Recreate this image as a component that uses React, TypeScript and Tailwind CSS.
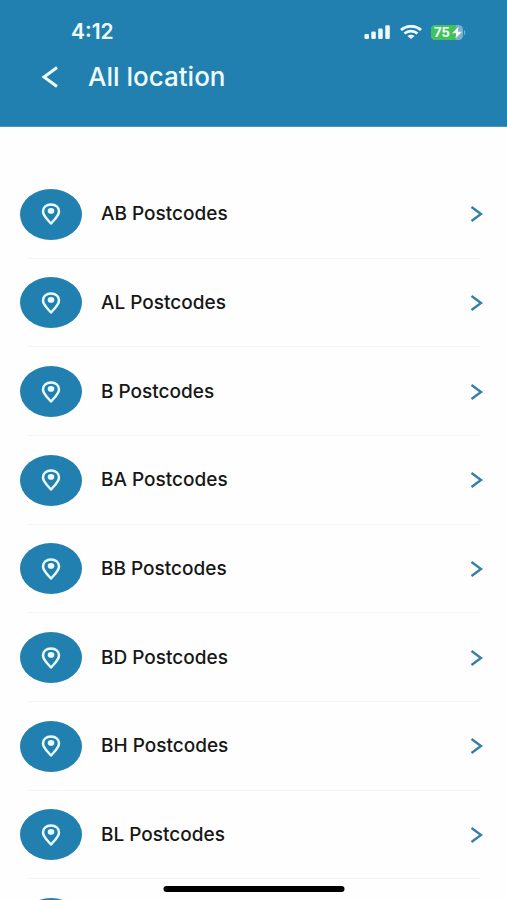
const postcodes = ['AB', 'AL', 'B', 'BA', 'BB', 'BD', 'BH', 'BL', 'BN'];

function PinIcon() {
  return (
    <svg viewBox="0 0 20 22" className="h-[22px] w-5" fill="none" aria-hidden="true">
      <path
        d="M10 1.400C5.300 1.400 2 4.400 2 8.400c0 4.200 5 8.800 8 12.100 3-3.300 8-7.900 8-12.100C18 4.400 14.700 1.400 10 1.400Z"
        stroke="#e9fbff"
        strokeWidth="2.500"
        strokeLinejoin="round"
      />
      <ellipse cx="10" cy="7.900" rx="3.300" ry="2.800" fill="#e9fbff" />
    </svg>
  );
}

function StatusBar() {
  return (
    <div className="flex h-8 items-center justify-between pr-[41px] pl-[71px]">
      <span className="text-[21px] leading-6 font-semibold">4:12</span>
      <div className="flex items-center gap-[9px]">
        <svg viewBox="0 0 27 14" className="h-3.5 w-[27px]" fill="currentColor" aria-label="Signal">
          <rect x="0.500" y="9" width="4.500" height="5" rx="1.300" />
          <rect x="7.300" y="6.500" width="4.500" height="7.500" rx="1.300" />
          <rect x="14.200" y="3.500" width="4.500" height="10.500" rx="1.300" />
          <rect x="21.300" y="0.300" width="4.500" height="13.700" rx="1.300" />
        </svg>
        <svg viewBox="0 0 22 14" className="h-3.5 w-[22px]" fill="none" stroke="currentColor" aria-label="Wi-Fi">
          <path d="M1 5c5.500-4.900 14.500-4.900 20 0" strokeWidth="2.700" />
          <path d="M4.500 8.500c3.700-3.200 9.300-3.200 13 0" strokeWidth="2.700" />
          <path d="M7.500 11c2-1.700 5-1.700 7 0L11 14Z" fill="currentColor" stroke="none" />
        </svg>
        <svg viewBox="0 0 35 15" className="h-[15px] w-[35px]" role="img" aria-label="Battery 75 percent, charging">
          <rect width="32" height="15" rx="4.500" fill="#7bb0cc" />
          <path d="M4.500 0H25v15H4.500A4.500 4.500 0 0 1 0 10.500v-6A4.500 4.500 0 0 1 4.500 0Z" fill="#3fc35f" />
          <path d="M33 5c1.800.600 1.800 4.400 0 5Z" fill="#7bb0cc" />
          <text x="3" y="12" fill="#fff" fontSize="13" fontWeight="700" fontFamily="Inter, sans-serif">
            75
          </text>
          <path d="m27.500 1.800-6.500 6.500h4.300L24.500 13.200 31 6.700h-4.300Z" fill="#fff" />
        </svg>
      </div>
    </div>
  );
}

function LocationRow({ code }: { code: string }) {
  return (
    <li className="relative">
      <button type="button" className="flex h-full w-full items-center pr-6 pl-5 text-left">
        <span className="flex h-[51px] w-[62px] shrink-0 items-center justify-center rounded-[50%] bg-[#2180af]">
          <PinIcon />
        </span>
        <span className="ml-[19px] flex-1 text-[19px] leading-6 font-medium text-[#171717]">{code} Postcodes</span>
        <svg viewBox="0 0 13 16" className="h-4 w-[13px]" fill="none" stroke="#3580a4" strokeWidth="2.400" aria-hidden="true">
          <path d="m1.500 1 9.500 7-9.500 7" />
        </svg>
      </button>
      <div className="absolute right-[27px] bottom-0 left-7 h-px bg-[#f5f5f5]" />
    </li>
  );
}

export default function App() {
  return (
    <div className="flex h-screen flex-col bg-[#fefefe] font-['Inter','Liberation_Sans',sans-serif]">
      <header className="shrink-0 border-b border-[#4f91b8] bg-[#2180af] pt-4 pb-[33px] text-[#effcff]">
        <StatusBar />
        <div className="mt-3 flex h-[33px] items-center pl-10">
          <button type="button" aria-label="Back" className="flex w-5 justify-center">
            <svg viewBox="0 0 18 22" className="h-[22px] w-[18px]" fill="none" stroke="currentColor" strokeWidth="3">
              <path d="M16 1.500 3 11l13 9.500" />
            </svg>
          </button>
          <h1 className="ml-7 text-[26px] leading-8 font-medium">All location</h1>
        </div>
      </header>
      <main className="min-h-0 flex-1 overflow-y-auto pt-[43px] [scrollbar-width:none]">
        <ul className="grid min-h-[798px] auto-rows-fr">
          {postcodes.map((code) => (
            <LocationRow key={code} code={code} />
          ))}
        </ul>
      </main>
      <div className="fixed bottom-2 left-1/2 h-[6px] w-[181px] -translate-x-1/2 rounded-full bg-black" />
    </div>
  );
}
